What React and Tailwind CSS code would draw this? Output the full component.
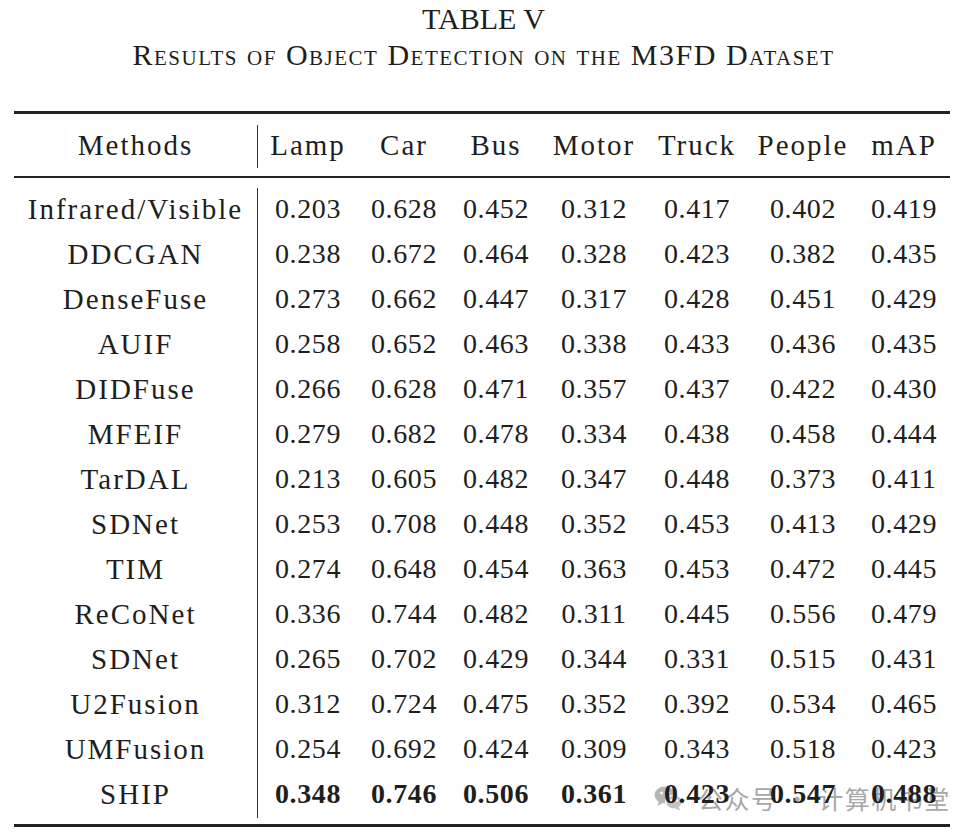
const rows = [
  ["Infrared/Visible", "0.203", "0.628", "0.452", "0.312", "0.417", "0.402", "0.419"],
  ["DDCGAN", "0.238", "0.672", "0.464", "0.328", "0.423", "0.382", "0.435"],
  ["DenseFuse", "0.273", "0.662", "0.447", "0.317", "0.428", "0.451", "0.429"],
  ["AUIF", "0.258", "0.652", "0.463", "0.338", "0.433", "0.436", "0.435"],
  ["DIDFuse", "0.266", "0.628", "0.471", "0.357", "0.437", "0.422", "0.430"],
  ["MFEIF", "0.279", "0.682", "0.478", "0.334", "0.438", "0.458", "0.444"],
  ["TarDAL", "0.213", "0.605", "0.482", "0.347", "0.448", "0.373", "0.411"],
  ["SDNet", "0.253", "0.708", "0.448", "0.352", "0.453", "0.413", "0.429"],
  ["TIM", "0.274", "0.648", "0.454", "0.363", "0.453", "0.472", "0.445"],
  ["ReCoNet", "0.336", "0.744", "0.482", "0.311", "0.445", "0.556", "0.479"],
  ["SDNet", "0.265", "0.702", "0.429", "0.344", "0.331", "0.515", "0.431"],
  ["U2Fusion", "0.312", "0.724", "0.475", "0.352", "0.392", "0.534", "0.465"],
  ["UMFusion", "0.254", "0.692", "0.424", "0.309", "0.343", "0.518", "0.423"],
  ["SHIP", "0.348", "0.746", "0.506", "0.361", "0.423", "0.547", "0.488"],
];

const headers = ["Lamp", "Car", "Bus", "Motor", "Truck", "People", "mAP"];

const gridCols =
  "grid grid-cols-[244px_100px_92px_92px_104px_102px_110px_92px]";

const WeChatIcon = () => (
  <svg width="30" height="26" viewBox="0 0 30 26">
    <ellipse cx="11" cy="10" rx="10.5" ry="8.5" fill="#b5b5b5" />
    <path d="M5 16 L3.5 21 L9.5 17.5 Z" fill="#b5b5b5" />
    <circle cx="7.5" cy="8" r="1.4" fill="#fff" />
    <circle cx="14.5" cy="8" r="1.4" fill="#fff" />
    <ellipse cx="20" cy="17" rx="8.5" ry="7" fill="#c4c4c4" stroke="#fff" strokeWidth="1.2" />
    <path d="M24.5 22 L26.5 25.5 L21 23.5 Z" fill="#c4c4c4" />
    <circle cx="17" cy="15.5" r="1.2" fill="#fff" />
    <circle cx="23" cy="15.5" r="1.2" fill="#fff" />
  </svg>
);

export default function App() {
  return (
    <div className="relative w-[967px] h-[836px] overflow-hidden bg-white text-[#1e1e1e] font-['Liberation_Serif',serif]">
      {/* watermark sits behind the table text */}
      <div className="absolute left-[654px] top-[783px] flex items-center gap-[14px] text-[#a8a8a8]">
        <WeChatIcon />
        <span className="text-[25px] leading-[30px] tracking-[1.5px] font-['Noto_Sans_CJK_SC',sans-serif]">
          公众号 · 计算机书堂
        </span>
      </div>

      <div className="relative pt-[1px] text-center">
        <div className="text-[30px] leading-[36px]">TABLE V</div>
        <div className="text-[30px] leading-[36px] tracking-[1.5px] [font-variant-caps:small-caps]">
          Results of Object Detection on the M3FD Dataset
        </div>
      </div>

      <div className="relative ml-[14px] w-[936px] mt-[38px]">
        <div className="h-[3px] bg-[#222]" />
        <div className={`${gridCols} mt-[11px] h-[43px] text-[29px] leading-[40px] tracking-[2px] text-center`}>
          <div className="border-r border-[#333]">Methods</div>
          {headers.map((h) => (
            <div key={h}>{h}</div>
          ))}
        </div>
        <div className="mt-[8px] h-[2px] bg-[#222]" />
        <div className="mt-[10px]">
          {rows.map((r, i) => (
            <div key={i} className={`${gridCols} h-[45px] text-center`}>
              <div className="border-r border-[#333] text-[29px] leading-[42px] tracking-[2px]">
                {r[0]}
              </div>
              {r.slice(1).map((v, j) => (
                <div
                  key={j}
                  className={`text-[28px] leading-[41px] tracking-[0.6px] ${i === rows.length - 1 ? "font-bold" : ""}`}
                >
                  {v}
                </div>
              ))}
            </div>
          ))}
        </div>
        <div className="mt-[6px] h-[3px] bg-[#222]" />
      </div>
    </div>
  );
}
